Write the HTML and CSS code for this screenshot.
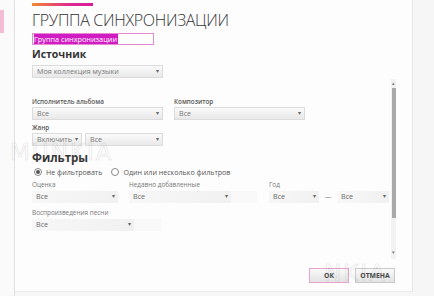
FILE: index.html
```html
<!DOCTYPE html>
<html lang="ru">
<head>
    <title>Группа синхронизации</title>
    <link rel="stylesheet" href="styles.css">
</head>
<body>
<div class="page">
    <aside class="side">
        <div class="side-mark"></div>
    </aside>
    <div class="dialog">
        <div class="accent"></div>
        <h1>ГРУППА СИНХРОНИЗАЦИИ</h1>
        <div class="name-box"><span class="selected">Группа синхронизации</span></div>
        <h2>Источник</h2>
        <div class="select src">Моя коллекция музыки<span class="arrow">▾</span></div>

        <div class="scroll-area">
            <div class="scroll-content">
                <div class="row top-row">
                    <div class="field">
                        <div class="label">Исполнитель альбома</div>
                        <div class="select w130">Все<span class="arrow">▾</span></div>
                    </div>
                    <div class="field">
                        <div class="label">Композитор</div>
                        <div class="select w130">Все<span class="arrow">▾</span></div>
                    </div>
                </div>
                <div class="field">
                    <div class="label">Жанр</div>
                    <div class="row gap3">
                        <div class="select w50">Включить<span class="arrow">▾</span></div>
                        <div class="select w78">Все<span class="arrow">▾</span></div>
                    </div>
                </div>

                <h3>Фильтры</h3>
                <div class="row radios">
                    <label class="radio"><span class="dot on"></span>Не фильтровать</label>
                    <label class="radio"><span class="dot"></span>Один или несколько фильтров</label>
                </div>

                <div class="row filters">
                    <div class="field c1">
                        <div class="label light">Оценка</div>
                        <div class="select flat w85">Все<span class="arrow">▾</span></div>
                    </div>
                    <div class="field c2">
                        <div class="label light">Недавно добавленные</div>
                        <div class="row">
                            <div class="select flat w102">Все<span class="arrow">▾</span></div>
                            <div class="tail w26"></div>
                        </div>
                    </div>
                    <div class="field">
                        <div class="label light">Год</div>
                        <div class="row">
                            <div class="select flat w50">Все<span class="arrow">▾</span></div>
                            <span class="dash">—</span>
                            <div class="select flat w52">Все<span class="arrow">▾</span></div>
                        </div>
                    </div>
                </div>
                <div class="field">
                    <div class="label light">Воспроизведения песни</div>
                    <div class="row">
                        <div class="select flat w102">Все<span class="arrow">▾</span></div>
                        <div class="tail w28"></div>
                    </div>
                </div>
            </div>
            <div class="scrollbar">
                <span class="sb-arrow">▴</span>
                <div class="thumb"></div>
                <span class="sb-arrow down">▾</span>
            </div>
        </div>

        <div class="buttons">
            <button class="btn ok">ОК</button>
            <button class="btn">ОТМЕНА</button>
        </div>
    </div>
</div>
<div class="watermark wm1">MUNKIA</div>
<div class="watermark wm2">NKIA</div>
</body>
</html>
```

FILE: styles.css
```css
*{
    box-sizing: border-box;
}
body{
    margin: 0;
    padding: 0;
    font-family: "Open Sans", "Noto Sans", sans-serif;
    background: #f6f6f6;
    color: #444;
    width: 434px;
    height: 296px;
    overflow: hidden;
}
.page{
    display: flex;
    height: 296px;
}
.side{
    width: 15px;
    border-right: 1px solid #e2e2e2;
    background: #fafafa;
    padding-top: 10px;
}
.side-mark{
    width: 4px;
    height: 23px;
    background: #f3bdd6;
}
.dialog{
    width: 398px;
    height: 292px;
    background: #fdfdfd;
    border-right: 1px solid #e6e6e6;
    border-bottom: 1px solid #ececec;
    padding-left: 17px;
    display: flex;
    flex-direction: column;
}
.accent{
    width: 61px;
    height: 3px;
    margin-top: 3px;
    background: linear-gradient(90deg, #f08a30, #e02a90 60%, #d81b9c);
}
h1{
    margin: 3px 0 0;
    font-size: 16px;
    font-weight: 300;
    line-height: 22px;
    color: #333;
    letter-spacing: -0.3px;
}
.name-box{
    width: 122px;
    height: 12px;
    margin-top: 2px;
    border: 1px solid #e58ad0;
    background: #fff;
    padding: 0 1px;
    display: flex;
    align-items: center;
}
.selected{
    background: #d21cc3;
    color: #fff;
    font-size: 7.3px;
    line-height: 10px;
    padding-right: 1px;
}
h2{
    margin: 2px 0 0;
    font-size: 10.5px;
    font-weight: 700;
    line-height: 15px;
    color: #333;
}
.select{
    position: relative;
    height: 13px;
    border: 1px solid #dcdcdc;
    background: linear-gradient(#fafafa, #e9e9e9);
    font-size: 7.2px;
    line-height: 11px;
    color: #777;
    padding-left: 4px;
}
.select.src{
    width: 131px;
    margin-top: 3px;
}
.arrow{
    position: absolute;
    right: 3px;
    top: 0;
    font-size: 6px;
    color: #666;
}
.w130{ width: 131px; }
.w50{ width: 50px; }
.w52{ width: 52px; }
.w78{ width: 78px; }
.w85{ width: 86px; }
.w102{ width: 102px; }
.w26{ width: 26px; }
.w28{ width: 28px; }
.select.flat{
    border: none;
    height: 12px;
    background: linear-gradient(90deg, #f7f7f7, #f1f1f1);
    color: #6a6a6a;
    padding-left: 4px;
}
.tail{
    height: 12px;
    background: #f9f9f9;
}
.scroll-area{
    display: flex;
    height: 180px;
    margin-top: 1px;
}
.scroll-content{
    flex: 1;
    padding-top: 18px;
}
.row{
    display: flex;
}
.top-row{
    gap: 11px;
}
.gap3{
    gap: 3px;
}
.label{
    font-size: 6.3px;
    line-height: 9px;
    font-weight: 600;
    color: #555;
    margin-bottom: 1px;
}
.label.light{
    font-weight: 400;
    color: #777;
    font-size: 6.4px;
    margin-bottom: 2px;
}
.field{
    margin-bottom: 3px;
}
.filters .field{
    margin-bottom: 5px;
}
h3{
    margin: 4px 0 0;
    font-size: 11.5px;
    font-weight: 700;
    line-height: 15px;
    color: #333;
}
.radios{
    gap: 9px;
    margin-top: 2px;
    margin-bottom: 3px;
    padding-left: 2px;
}
.radio{
    display: flex;
    align-items: center;
    gap: 4px;
    font-size: 7.1px;
    line-height: 10px;
    color: #555;
}
.dot{
    width: 8px;
    height: 8px;
    border: 1px solid #888;
    border-radius: 50%;
    background: #fff;
    display: flex;
    align-items: center;
    justify-content: center;
}
.dot.on::after{
    content: "";
    width: 4px;
    height: 4px;
    border-radius: 50%;
    background: #555;
}
.c1{
    width: 97px;
}
.c2{
    width: 140px;
}
.dash{
    width: 18px;
    text-align: center;
    font-size: 7px;
    line-height: 12px;
    color: #888;
}
.scrollbar{
    width: 5px;
    margin-right: 16px;
    margin-left: 2px;
    background: #f2f2f2;
    display: flex;
    flex-direction: column;
    align-items: center;
}
.sb-arrow{
    font-size: 5px;
    line-height: 8px;
    color: #777;
}
.thumb{
    width: 4px;
    height: 130px;
    background: #a9a9a9;
    margin-top: 1px;
}
.sb-arrow.down{
    margin-top: auto;
    margin-bottom: 3px;
}
.buttons{
    display: flex;
    justify-content: flex-end;
    gap: 6px;
    margin-top: 9px;
    padding-right: 17px;
}
.btn{
    width: 40px;
    height: 15px;
    padding: 0;
    border: 1px solid #c9c9c9;
    background: linear-gradient(#f9f9f9, #e4e4e4);
    font-family: "Open Sans", "Noto Sans", sans-serif;
    font-size: 6.8px;
    font-weight: 700;
    color: #444;
}
.btn.ok{
    border-color: #e7a3cf;
}
.watermark{
    position: absolute;
    font-family: "DejaVu Sans", sans-serif;
    font-size: 23px;
    letter-spacing: 2px;
    color: transparent;
    -webkit-text-stroke: 0.6px rgba(150, 150, 150, 0.3);
    pointer-events: none;
}
.wm1{
    left: 10px;
    top: 139px;
}
.wm2{
    left: 324px;
    top: 260px;
}
```
